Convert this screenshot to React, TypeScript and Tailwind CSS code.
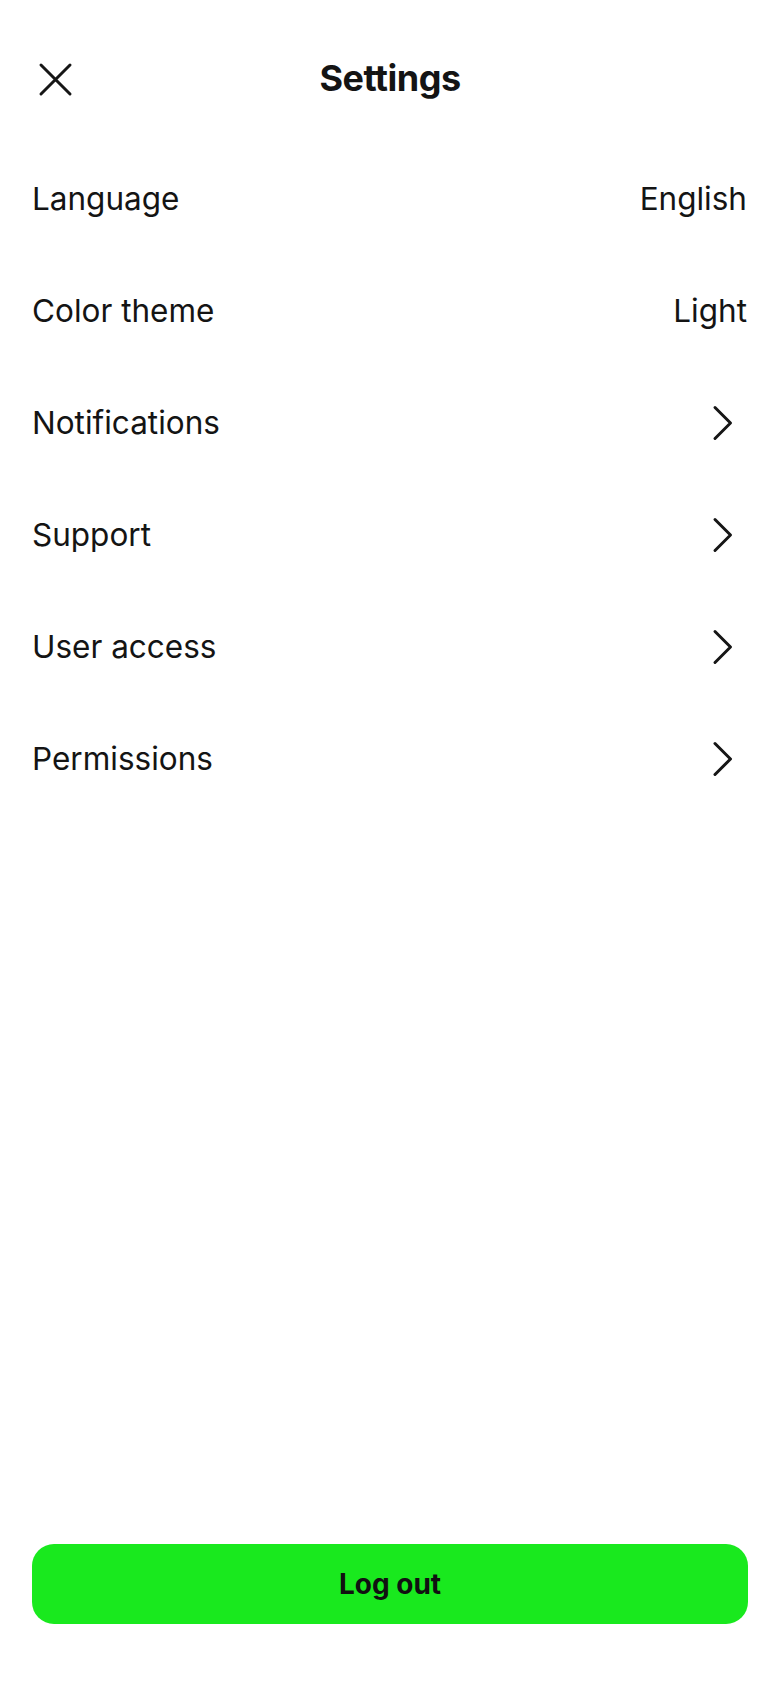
import { ReactNode } from "react";

const rows: { label: string; value?: string }[] = [
  { label: "Language", value: "English" },
  { label: "Color theme", value: "Light" },
  { label: "Notifications" },
  { label: "Support" },
  { label: "User access" },
  { label: "Permissions" },
];

function Chevron() {
  return (
    <svg width="24" height="36" viewBox="0 0 24 36" fill="none" className="mr-[12px]">
      <path d="M4 2.5 L19.5 18 L4 33.5" stroke="#161616" strokeWidth="3" strokeLinecap="round" strokeLinejoin="round" />
    </svg>
  );
}

function Row({ label, right }: { label: string; right: ReactNode }) {
  return (
    <div className="flex h-[112px] items-center justify-between pl-[32px] pr-[33px]">
      <span className="text-[31.5px] leading-none">{label}</span>
      {right}
    </div>
  );
}

export default function App() {
  return (
    <div
      className="flex min-h-screen flex-col bg-white text-[#141414]"
      style={{ fontFamily: "Inter, Roboto, 'Liberation Sans', sans-serif" }}
    >
      {/* Header */}
      <header className="relative flex h-[143px] items-center justify-center pt-[12px]">
        <button className="absolute left-[38px] top-[62px] p-0">
          <svg width="35" height="35" viewBox="0 0 35 35" fill="none">
            <path d="M3 3 L32 32 M32 3 L3 32" stroke="#161616" strokeWidth="3" strokeLinecap="round" />
          </svg>
        </button>
        <h1 className="text-[36px] font-bold leading-none tracking-[-0.5px]">Settings</h1>
      </header>

      {/* Rows */}
      <div className="flex flex-col">
        {rows.map((r) => (
          <Row
            key={r.label}
            label={r.label}
            right={r.value ? <span className="text-[31.5px] leading-none">{r.value}</span> : <Chevron />}
          />
        ))}
      </div>

      {/* Log out */}
      <div className="mt-auto mb-[64px] px-[32px]">
        <button className="flex h-[80px] w-full items-center justify-center rounded-[22px] bg-[#19e91e] text-[28px] font-bold text-[#111]">
          Log out
        </button>
      </div>
    </div>
  );
}
